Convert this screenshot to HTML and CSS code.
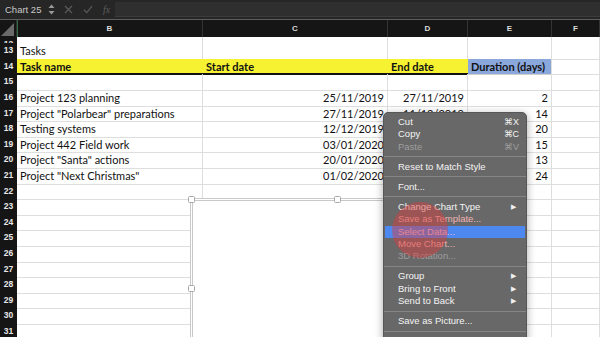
FILE: index.html
```html
<!DOCTYPE html>
<html>
  <head>
    <title>Tasks - Chart 25</title>
    <link rel="stylesheet" href="styles.css">
  </head>
  <body>
    <div class="app">
      <div class="toolbar">
        <div class="name-box">
          <span>Chart 25</span>
          <svg class="stepper" width="7" height="11" viewBox="0 0 7 11">
            <path d="M3.5 0.5 L6.5 4 L0.5 4 Z" fill="#9a9a9a" />
            <path d="M3.5 10.5 L6.5 7 L0.5 7 Z" fill="#9a9a9a" />
          </svg>
        </div>
        <div class="tool-icons">
          <svg width="9" height="9" viewBox="0 0 9 9">
            <path d="M1 1 L8 8 M8 1 L1 8" stroke="#595959" stroke-width="1.3" />
          </svg>
          <svg width="10" height="9" viewBox="0 0 10 9">
            <path d="M1 4.8 L3.8 7.6 L9 1.2" stroke="#595959" stroke-width="1.3" fill="none" />
          </svg>
          <span class="fx">fx</span>
        </div>
        <div class="formula"></div>
      </div>

      <div class="sheet">
        <div class="row head">
          <div class="corner"><span class="tri"></span></div>
          <div class="col-name sel">B</div>
          <div class="col-name">C</div>
          <div class="col-name">D</div>
          <div class="col-name">E</div>
          <div class="col-name">F</div>
        </div>

        <div class="row cut">
          <div class="num">12</div>
          <div class="cell"></div><div class="cell"></div><div class="cell"></div><div class="cell"></div><div class="cell"></div>
        </div>
        <div class="row">
          <div class="num">13</div>
          <div class="cell">Tasks</div><div class="cell"></div><div class="cell"></div><div class="cell"></div><div class="cell"></div>
        </div>
        <div class="row">
          <div class="num">14</div>
          <div class="cell yellow">Task name</div>
          <div class="cell yellow">Start date</div>
          <div class="cell yellow">End date</div>
          <div class="cell blue">Duration (days)</div>
          <div class="cell"></div>
        </div>
        <div class="row">
          <div class="num">15</div>
          <div class="cell"></div><div class="cell"></div><div class="cell"></div><div class="cell"></div><div class="cell"></div>
        </div>
        <div class="row">
          <div class="num">16</div>
          <div class="cell">Project 123 planning</div>
          <div class="cell num-val">25/11/2019</div>
          <div class="cell num-val">27/11/2019</div>
          <div class="cell num-val">2</div>
          <div class="cell"></div>
        </div>
        <div class="row">
          <div class="num">17</div>
          <div class="cell">Project "Polarbear" preparations</div>
          <div class="cell num-val">27/11/2019</div>
          <div class="cell num-val">11/12/2019</div>
          <div class="cell num-val">14</div>
          <div class="cell"></div>
        </div>
        <div class="row">
          <div class="num">18</div>
          <div class="cell">Testing systems</div>
          <div class="cell num-val">12/12/2019</div>
          <div class="cell num-val">01/01/2020</div>
          <div class="cell num-val">20</div>
          <div class="cell"></div>
        </div>
        <div class="row">
          <div class="num">19</div>
          <div class="cell">Project 442 Field work</div>
          <div class="cell num-val">03/01/2020</div>
          <div class="cell num-val">18/01/2020</div>
          <div class="cell num-val">15</div>
          <div class="cell"></div>
        </div>
        <div class="row">
          <div class="num">20</div>
          <div class="cell">Project "Santa" actions</div>
          <div class="cell num-val">20/01/2020</div>
          <div class="cell num-val">02/02/2020</div>
          <div class="cell num-val">13</div>
          <div class="cell"></div>
        </div>
        <div class="row">
          <div class="num">21</div>
          <div class="cell">Project "Next Christmas"</div>
          <div class="cell num-val">01/02/2020</div>
          <div class="cell num-val">25/02/2020</div>
          <div class="cell num-val">24</div>
          <div class="cell"></div>
        </div>
        <div class="row">
          <div class="num">22</div>
          <div class="cell"></div><div class="cell"></div><div class="cell"></div><div class="cell"></div><div class="cell"></div>
        </div>
        <div class="row">
          <div class="num">23</div>
          <div class="cell"></div><div class="cell"></div><div class="cell"></div><div class="cell"></div><div class="cell"></div>
        </div>
        <div class="row">
          <div class="num">24</div>
          <div class="cell"></div><div class="cell"></div><div class="cell"></div><div class="cell"></div><div class="cell"></div>
        </div>
        <div class="row">
          <div class="num">25</div>
          <div class="cell"></div><div class="cell"></div><div class="cell"></div><div class="cell"></div><div class="cell"></div>
        </div>
        <div class="row">
          <div class="num">26</div>
          <div class="cell"></div><div class="cell"></div><div class="cell"></div><div class="cell"></div><div class="cell"></div>
        </div>
        <div class="row">
          <div class="num">27</div>
          <div class="cell"></div><div class="cell"></div><div class="cell"></div><div class="cell"></div><div class="cell"></div>
        </div>
        <div class="row">
          <div class="num">28</div>
          <div class="cell"></div><div class="cell"></div><div class="cell"></div><div class="cell"></div><div class="cell"></div>
        </div>
        <div class="row">
          <div class="num">29</div>
          <div class="cell"></div><div class="cell"></div><div class="cell"></div><div class="cell"></div><div class="cell"></div>
        </div>
        <div class="row">
          <div class="num">30</div>
          <div class="cell"></div><div class="cell"></div><div class="cell"></div><div class="cell"></div><div class="cell"></div>
        </div>
        <div class="row">
          <div class="num">31</div>
          <div class="cell"></div><div class="cell"></div><div class="cell"></div><div class="cell"></div><div class="cell"></div>
        </div>
      </div>

      <!-- selected (empty) chart object -->
      <div class="chart">
        <span class="handle h-tl"></span>
        <span class="handle h-tm"></span>
        <span class="handle h-ml"></span>
      </div>

      <!-- right click menu -->
      <div class="menu">
        <div class="item">Cut<span class="key">⌘X</span></div>
        <div class="item">Copy<span class="key">⌘C</span></div>
        <div class="item off">Paste<span class="key">⌘V</span></div>
        <div class="sep"></div>
        <div class="item">Reset to Match Style</div>
        <div class="sep"></div>
        <div class="item">Font...</div>
        <div class="sep"></div>
        <div class="item">Change Chart Type<span class="arrow">▶</span></div>
        <div class="item pink">Save as Template...</div>
        <div class="item pink active">Select Data...</div>
        <div class="item pink">Move Chart...</div>
        <div class="item off">3D Rotation...</div>
        <div class="sep"></div>
        <div class="item">Group<span class="arrow">▶</span></div>
        <div class="item">Bring to Front<span class="arrow">▶</span></div>
        <div class="item">Send to Back<span class="arrow">▶</span></div>
        <div class="sep"></div>
        <div class="item">Save as Picture...</div>
        <div class="sep"></div>
        <div class="item">Assign Macro...</div>
      </div>

      <!-- click marker from the screen recording -->
      <div class="click-dot"></div>
    </div>
  </body>
</html>
```

FILE: styles.css
```css
body {
  margin: 0;
  background: #ffffff;
}

.app {
  position: relative;
  width: 600px;
  height: 337px;
  overflow: hidden;
  font-family: Lato, "Liberation Sans", sans-serif;
}

/* formula bar */
.toolbar {
  height: 19px;
  background-color: #262626;
  border-bottom: 1px solid #5e5e5e;
  display: flex;
  align-items: center;
}

.name-box {
  width: 57px;
  height: 19px;
  padding-left: 5px;
  box-sizing: border-box;
  display: flex;
  align-items: center;
  gap: 7px;
  color: #c8c8c8;
  font-family: "Liberation Sans", sans-serif;
  font-size: 9.5px;
}

.tool-icons {
  width: 58px;
  display: flex;
  align-items: center;
  gap: 10px;
  padding-left: 7px;
  box-sizing: border-box;
}

.fx {
  color: #5c5c5c;
  font-family: "Liberation Serif", serif;
  font-style: italic;
  font-size: 10px;
}

.formula {
  flex: 1;
  height: 14px;
  background-color: #2f2f2f;
  border-bottom: 1px solid #3d3d3d;
}

/* grid */
.row {
  display: grid;
  grid-template-columns: 17px 186px 185px 80px 84px 48px;
  height: 15.6px;
}

.row.head {
  height: 17px;
  background-color: #151515;
}

.row.cut {
  height: 6.2px;
  overflow: hidden;
}

.corner {
  position: relative;
  border-right: 1px solid #2f2f2f;
}

.tri {
  position: absolute;
  right: 2px;
  bottom: 1px;
  width: 0;
  height: 0;
  border-left: 13px solid transparent;
  border-bottom: 13px solid #6a6a6a;
}

.col-name {
  display: flex;
  align-items: center;
  justify-content: center;
  color: #dcdcdc;
  font-family: "Liberation Sans", sans-serif;
  font-weight: bold;
  font-size: 8px;
  border-right: 1px solid #333333;
}

.col-name.sel {
  box-shadow: inset 1px 0 0 #2e6b3f;
}

.num {
  background-color: #151515;
  color: #e8e8e8;
  font-family: "Liberation Sans", sans-serif;
  font-weight: bold;
  font-size: 8.5px;
  display: flex;
  align-items: flex-end;
  justify-content: center;
  line-height: 15.6px;
  border-bottom: 1px solid #383838;
  box-sizing: border-box;
}

.cell {
  border-right: 1px solid #dedede;
  border-bottom: 1px solid #dedede;
  box-sizing: border-box;
  padding-left: 3px;
  font-size: 11px;
  color: #111111;
  white-space: nowrap;
  display: flex;
  align-items: flex-end;
  line-height: 14.6px;
}

.cell.num-val {
  justify-content: flex-end;
  padding-right: 3px;
}

.cell.yellow {
  background-color: #f6f232;
  font-weight: bold;
  border-right: none;
  border-bottom: 2px solid #111111;
  line-height: 13.6px;
}

.cell.blue {
  background-color: #8aa8dc;
  font-weight: bold;
  border-bottom: 1px solid #cfcfcf;
}

/* chart object */
.chart {
  position: absolute;
  left: 190px;
  top: 198px;
  width: 294px;
  height: 178px;
  background: #ffffff;
  border: 3px double #c9c9c9;
  box-sizing: border-box;
}

.handle {
  position: absolute;
  width: 5px;
  height: 5px;
  background: #ffffff;
  border: 1px solid #a8a8a8;
  border-radius: 1.5px;
}

.h-tl {
  left: -5px;
  top: -5px;
}

.h-tm {
  left: 141px;
  top: -5px;
}

.h-ml {
  left: -5px;
  top: 84px;
}

/* context menu */
.menu {
  position: absolute;
  left: 383px;
  top: 112px;
  width: 144px;
  height: 240px;
  padding-top: 3px;
  box-sizing: border-box;
  background-color: #686868;
  border: 1px solid #575757;
  border-radius: 5px;
  box-shadow: 0 2px 8px rgba(0, 0, 0, 0.35);
  font-family: "Liberation Sans", sans-serif;
  font-size: 9.5px;
  color: #f4f4f4;
}

.item {
  height: 12.4px;
  line-height: 12.4px;
  padding-left: 14px;
  padding-right: 7px;
  display: flex;
  justify-content: space-between;
}

.item.off {
  color: #9e9e9e;
}

.item.pink {
  color: #f0b2b2;
}

.item.active {
  background-color: #4c88ef;
  color: #f2bfd6;
  margin: 0 1px;
  padding-left: 13px;
}

.key {
  font-size: 9px;
}

.arrow {
  font-size: 7px;
  padding-right: 3px;
  color: #f0f0f0;
}

.sep {
  height: 1px;
  background-color: #858585;
  margin: 3.3px 0;
}

.click-dot {
  position: absolute;
  left: 392px;
  top: 202px;
  width: 56px;
  height: 56px;
  border-radius: 50%;
  background-color: rgba(220, 60, 60, 0.45);
}
```
